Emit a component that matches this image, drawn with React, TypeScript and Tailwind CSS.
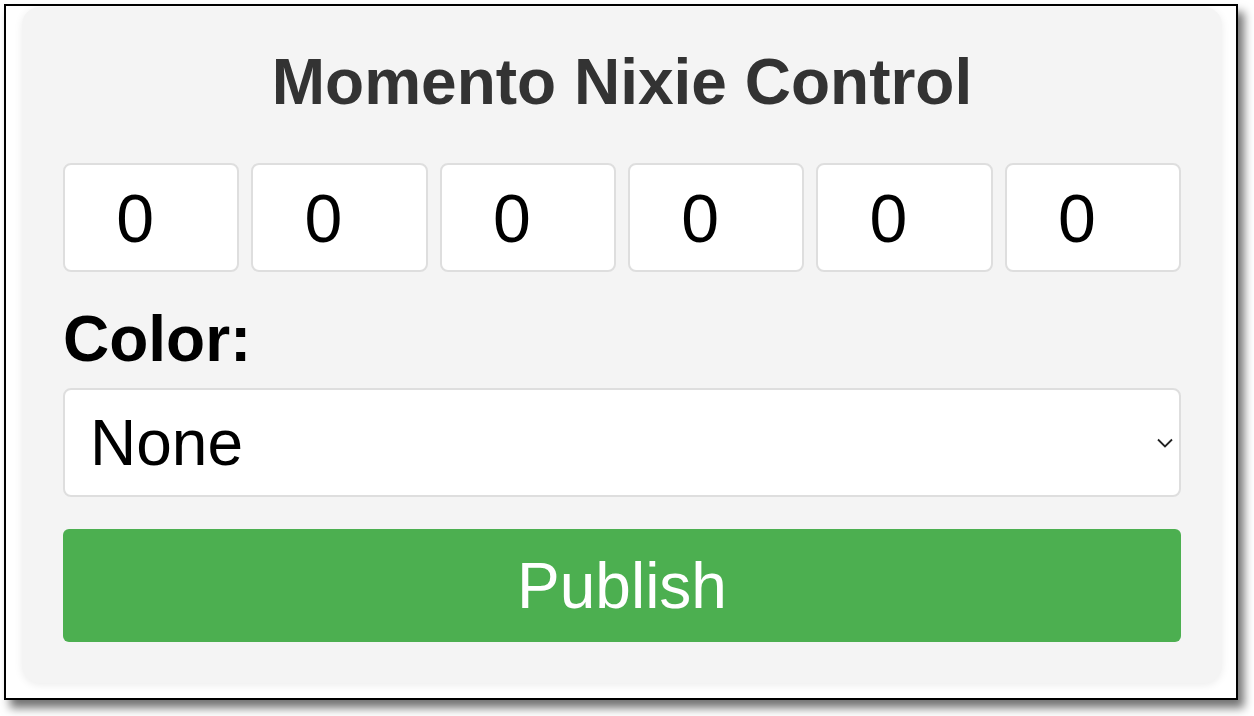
const digits = ['0', '0', '0', '0', '0', '0'];

function Chevron() {
  return (
    <svg width="16" height="10" viewBox="0 0 16 10" fill="none" aria-hidden="true">
      <path d="M1 1.5 L8 8.5 L15 1.5" stroke="#222" strokeWidth="1.8" />
    </svg>
  );
}

export default function App() {
  return (
    <div className="w-[1254px] h-[716px] bg-white pt-[4px] pl-[4px] font-['Liberation_Sans',Arial,sans-serif]">
      <div className="w-[1234px] h-[696px] border-2 border-black bg-white shadow-[6px_8px_9px_rgba(0,0,0,0.55)] overflow-hidden">
        <div className="ml-[16px] mt-[1px] w-[1200px] h-[676px] rounded-[18px] bg-[#f4f4f4] shadow-[0_2px_8px_rgba(0,0,0,0.08)] px-[41px] pt-[38px] pb-[41px] flex flex-col">
          <h1 className="text-center text-[64px] leading-[74px] font-bold text-[#333]">
            Momento Nixie Control
          </h1>

          <div className="mt-[44px] grid grid-cols-6 gap-[12px]">
            {digits.map((d, i) => (
              <div
                key={i}
                className="h-[109px] rounded-[8px] border-2 border-[#dedede] bg-white flex items-center justify-center pr-[32px] text-[68px] text-black"
              >
                {d}
              </div>
            ))}
          </div>

          <label className="mt-[30px] text-[64px] leading-[74px] font-bold text-black">Color:</label>

          <div className="mt-[12px] h-[109px] rounded-[8px] border-2 border-[#dedede] bg-white flex items-center justify-between pl-[25px] pr-[6px]">
            <span className="text-[64px] text-black">None</span>
            <Chevron />
          </div>

          <button className="mt-[32px] h-[113px] rounded-[6px] bg-[#4caf50] text-white text-[64px] flex items-center justify-center">
            Publish
          </button>
        </div>
      </div>
    </div>
  );
}
